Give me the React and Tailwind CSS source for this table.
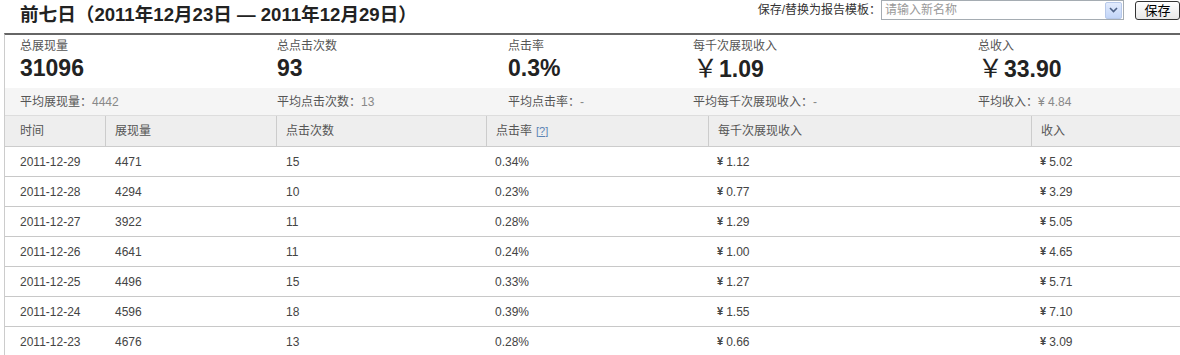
import React from 'react';

const FONT = '"Liberation Sans", Arial, "Noto Sans CJK SC", sans-serif';

const stats = [
  { label: '总展现量', value: '31096', avgLabel: '平均展现量：', avg: '4442', w: 'w-[257px]' },
  { label: '总点击次数', value: '93', avgLabel: '平均点击次数：', avg: '13', w: 'w-[231px]' },
  { label: '点击率', value: '0.3%', avgLabel: '平均点击率：', avg: '-', w: 'w-[185px]' },
  { label: '每千次展现收入', value: '1.09', yen: true, avgLabel: '平均每千次展现收入：', avg: '-', w: 'w-[285px]' },
  { label: '总收入', value: '33.90', yen: true, avgLabel: '平均收入：', avg: '¥ 4.84', w: 'flex-1' },
];

const rows = [
  ['2011-12-29', '4471', '15', '0.34%', '1.12', '5.02'],
  ['2011-12-28', '4294', '10', '0.23%', '0.77', '3.29'],
  ['2011-12-27', '3922', '11', '0.28%', '1.29', '5.05'],
  ['2011-12-26', '4641', '11', '0.24%', '1.00', '4.65'],
  ['2011-12-25', '4496', '15', '0.33%', '1.27', '5.71'],
  ['2011-12-24', '4596', '18', '0.39%', '1.55', '7.10'],
  ['2011-12-23', '4676', '13', '0.28%', '0.66', '3.09'],
];

const cols = 'grid grid-cols-[100px_171px_210px_222px_323px_1fr]';

export default function App() {
  return (
    <div className="w-[1180px] h-[355px] overflow-hidden bg-white text-[#333]" style={{ fontFamily: FONT }}>
      {/* title bar */}
      <div className="h-[33px] flex items-start justify-between">
        <h1 className="pl-[20px] pt-[4px] text-[18.6px] font-bold leading-[22px] text-[#222]">
          前七日（2011年12月23日 — 2011年12月29日）
        </h1>
        <div className="flex items-center h-[20px] text-[12px]">
          <span className="text-[#333]">保存/替换为报告模板：</span>
          <div className="flex items-center w-[243px] h-[20px] border border-[#a5acb2] bg-white">
            <span className="flex-1 pl-[3px] text-[#999] text-[12px]">请输入新名称</span>
            <div className="w-[17px] h-[17px] mr-[1px] rounded-[2px] border border-[#b7c9ea] bg-gradient-to-b from-[#e3ecfd] to-[#c2d5f8] flex items-center justify-center">
              <svg width="9" height="6" viewBox="0 0 9 6">
                <path d="M1 1 L4.5 4.5 L8 1" fill="none" stroke="#4d6185" strokeWidth="1.6" />
              </svg>
            </div>
          </div>
          <button className="ml-[11px] h-[19px] w-[45px] rounded-[3px] border border-[#333] bg-gradient-to-b from-white to-[#e8e8e8] text-[13px] leading-[17px] text-black">
            保存
          </button>
        </div>
      </div>

      <div className="ml-[4px] border-t-2 border-[#666] border-l border-l-[#ccc]">
        {/* totals */}
        <div className="flex h-[53px] pl-[15px]">
          {stats.map((s) => (
            <div key={s.label} className={`${s.w} pt-[4px]`}>
              <div className="text-[12px] leading-[14px] text-[#555]">{s.label}</div>
              <div className="text-[23px] font-bold leading-[28px] text-[#222] mt-[1px]">
                {s.yen && <span className="font-normal text-[25px] mr-[1px]">￥</span>}
                {s.value}
              </div>
            </div>
          ))}
        </div>

        {/* averages */}
        <div className="flex h-[28px] items-center pl-[15px] bg-[#f5f5f5] text-[12px] border-b border-[#ddd]">
          {stats.map((s) => (
            <div key={s.avgLabel} className={s.w}>
              <span className="text-[#555]">{s.avgLabel}</span>
              <span className="text-[#888]">{s.avg}</span>
            </div>
          ))}
        </div>

        {/* table header */}
        <div className={`${cols} h-[31px] bg-[#eeeeee] text-[12px] text-[#555] border-b border-[#ccc]`}>
          <div className="pl-[15px] flex items-center">时间</div>
          <div className="pl-[9px] flex items-center border-l border-[#ccc]">展现量</div>
          <div className="pl-[9px] flex items-center border-l border-[#ccc]">点击次数</div>
          <div className="pl-[9px] flex items-center border-l border-[#ccc]">
            点击率<span className="ml-[4px] text-[#5b84b5] underline text-[11px]">[?]</span>
          </div>
          <div className="pl-[9px] flex items-center border-l border-[#ccc]">每千次展现收入</div>
          <div className="pl-[9px] flex items-center border-l border-[#ccc]">收入</div>
        </div>

        {/* table body */}
        {rows.map((r) => (
          <div key={r[0]} className={`${cols} h-[30px] text-[12px] text-[#444] border-b border-[#c8c8c8]`}>
            <div className="pl-[15px] flex items-center">{r[0]}</div>
            <div className="pl-[10px] flex items-center">{r[1]}</div>
            <div className="pl-[10px] flex items-center">{r[2]}</div>
            <div className="pl-[9px] flex items-center">{r[3]}</div>
            <div className="pl-[9px] flex items-center">
              <span className="font-bold mr-[3px] text-[11px]">¥</span>{r[4]}
            </div>
            <div className="pl-[9px] flex items-center">
              <span className="font-bold mr-[3px] text-[11px]">¥</span>{r[5]}
            </div>
          </div>
        ))}
      </div>
    </div>
  );
}
